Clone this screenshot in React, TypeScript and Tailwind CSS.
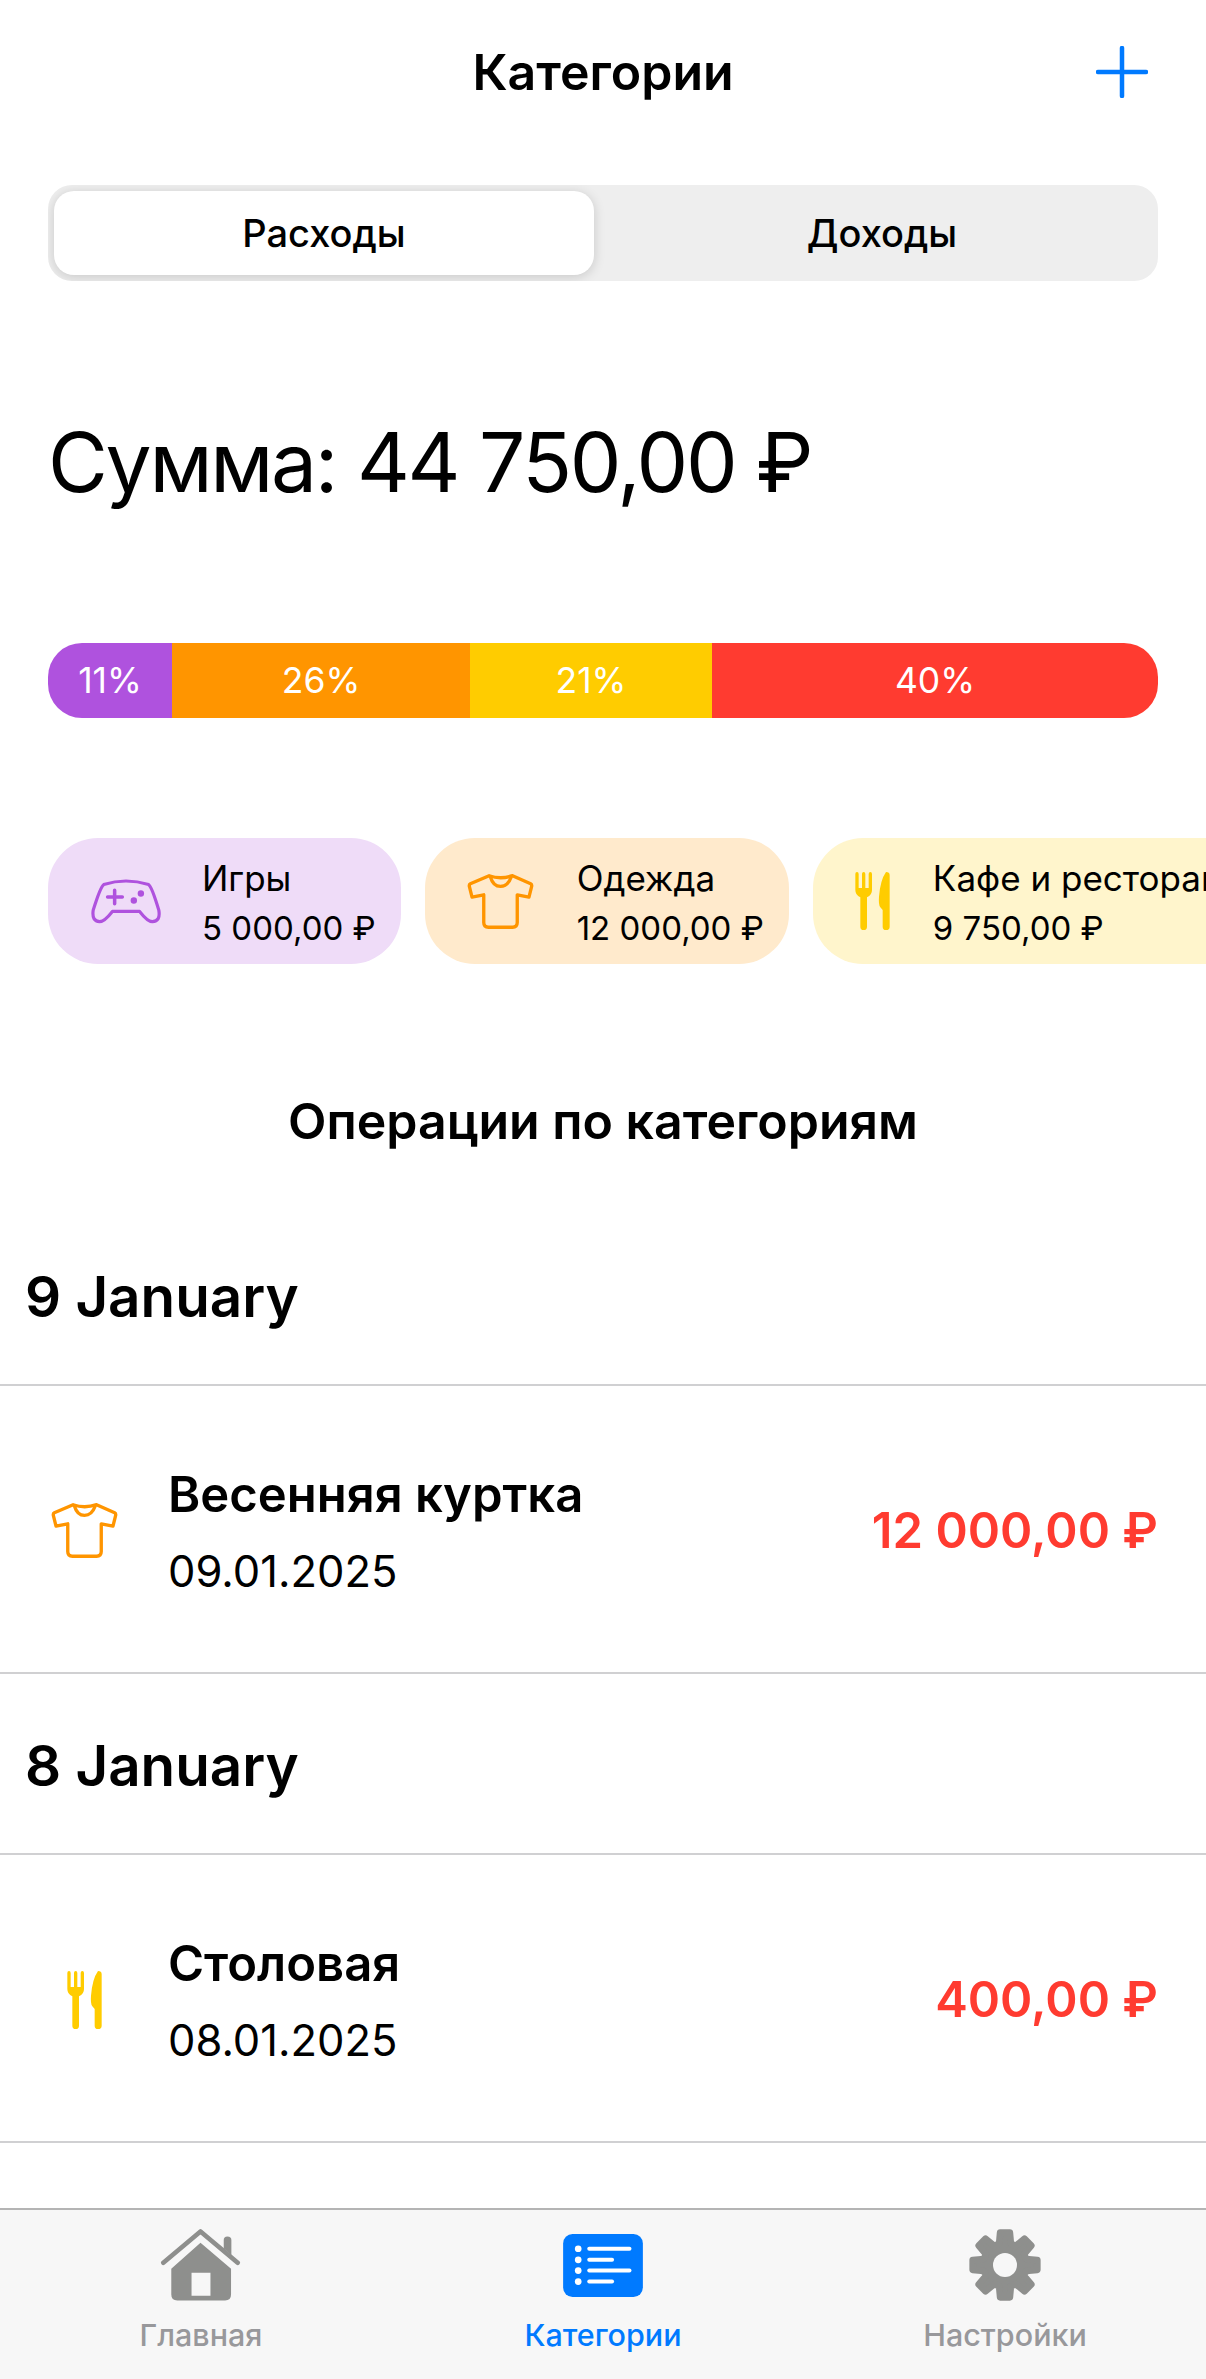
import type { ReactNode } from 'react';

const font = { fontFamily: 'Inter, "Noto Sans", sans-serif' };

function GamepadIcon() {
  return (
    <svg viewBox="85 80 225 146" className="w-[72px] h-[47px] shrink-0 -mr-[3px]" fill="none" stroke="#af52de" strokeWidth="10">
      <path d="M128 100 Q197 78 268 100 Q278 106 300 180 Q306 215 280 216 Q265 216 240 184 L155 184 Q130 216 115 216 Q90 215 95 180 Q118 106 128 100 Z" strokeLinejoin="round" />
      <path d="M162 118 V160 M140 139 H186" strokeWidth="11" strokeLinecap="round" />
      <circle cx="244" cy="128" r="10" fill="#af52de" stroke="none" />
      <circle cx="222" cy="150" r="10" fill="#af52de" stroke="none" />
    </svg>
  );
}

function ShirtIcon() {
  return (
    <svg viewBox="50 40 200 170" className="w-[67px] h-[57px] shrink-0" fill="none" stroke="#ff9500" strokeWidth="10" strokeLinejoin="round" strokeLinecap="round">
      <path d="M116 48 L60 72 Q56 74 57 80 L65 112 L100 105 V188 Q100 202 114 202 H186 Q200 202 200 188 V105 L235 112 L243 80 Q244 74 240 72 L186 48 Q150 60 116 48 Z" />
      <path d="M120 52 Q128 80 150 80 Q172 80 182 52" />
    </svg>
  );
}

function CutleryIcon() {
  return (
    <svg viewBox="72 36 105 174" className="w-[35px] h-[58px] shrink-0" fill="#ffcc00">
      <path d="M73 42 Q73 36 78 36 Q83 36 83 42 V84 H93 V42 Q93 36 98 36 Q103 36 103 42 V84 H113 V42 Q113 36 118 36 Q123 36 123 42 V90 Q123 106 108 112 V200 Q108 210 98 210 Q88 210 88 200 V112 Q73 106 73 90 Z" />
      <path d="M165 36 Q176 36 176 46 V200 Q176 210 165 210 Q155 210 155 200 V150 L148 142 Q142 134 144 110 Q148 60 165 36 Z" />
    </svg>
  );
}

function HomeIcon() {
  return (
    <svg viewBox="118 57 244 216" className="w-[81px] h-[72px] -translate-x-[1px]" fill="#8e8f8d">
      <path d="M128 158 L240 64 L352 158" fill="none" stroke="#8e8f8d" strokeWidth="14" strokeLinecap="round" strokeLinejoin="round" />
      <path d="M310 90 Q310 79 321 79 Q333 79 333 90 V135 L310 115 Z" />
      <path fillRule="evenodd" d="M240 98 L332 176 V254 Q332 272 314 272 H170 Q152 272 152 254 V176 Z M213 188 V258 H270 V188 Z" />
    </svg>
  );
}

function ListIcon() {
  return (
    <svg viewBox="67 70 238 188" className="w-[80px] h-[63px]">
      <rect x="67" y="70" width="238" height="188" rx="28" fill="#007aff" />
      {[114, 147, 179, 212].map((y, i) => (
        <g key={y}>
          <circle cx="112" cy={y} r="10" fill="#fff" />
          <path d={`M145 ${y} H${i % 2 === 0 ? 265 : 213}`} stroke="#fff" strokeWidth="12" strokeLinecap="round" />
        </g>
      ))}
    </svg>
  );
}

function gearPath() {
  // 8 зубьев вокруг центра
  let d = '';
  for (let i = 0; i < 8; i++) {
    const a = (i * Math.PI) / 4 - Math.PI / 2;
    const pt = (r: number, o: number) => `${(r * Math.cos(a + o)).toFixed(1)} ${(r * Math.sin(a + o)).toFixed(1)}`;
    d += `${i === 0 ? 'M' : 'L'}${pt(66, -0.27)} L${pt(98, -0.15)} L${pt(98, 0.15)} L${pt(66, 0.27)} `;
  }
  return d + 'Z';
}

function GearIcon() {
  return (
    <svg viewBox="-108 -108 216 216" className="w-[72px] h-[72px]">
      <path d={gearPath()} fill="#8e8f8d" stroke="#8e8f8d" strokeWidth="20" strokeLinejoin="round" />
      <circle r="36" fill="#f7f7f7" />
    </svg>
  );
}

function Chip({ bg, icon, title, value }: { bg: string; icon: ReactNode; title: string; value: string }) {
  return (
    <div className={`flex items-center shrink-0 h-[126px] rounded-[50px] pl-[42px] pr-[25px] gap-[43px] ${bg}`}>
      {icon}
      <div className="text-black whitespace-nowrap pt-[3px]">
        <div className="text-[35px] leading-[50px]">{title}</div>
        <div className="text-[33px] leading-[50px]">{value}</div>
      </div>
    </div>
  );
}

function DateHeader({ label }: { label: string }) {
  return (
    <div className="h-[181px] flex items-center pl-[25px] pt-[5px] border-b-2 border-[#d0d0d2] text-[56.5px] font-semibold text-black">
      {label}
    </div>
  );
}

function Row({ icon, title, date, amount }: { icon: ReactNode; title: string; date: string; amount: string }) {
  return (
    <div className="h-[288px] flex items-center pr-12 pt-[8px] border-b-2 border-[#d0d0d2]">
      <div className="w-[168px] pb-[5px] flex justify-center shrink-0">{icon}</div>
      <div className="flex-1">
        <div className="text-[49px] leading-[76px] font-semibold text-black">{title}</div>
        <div className="text-[43.5px] leading-[76px] text-black">{date}</div>
      </div>
      <div className="pb-[5px] text-[49px] font-semibold text-[#ff3b30]">{amount}</div>
    </div>
  );
}

function Tab({ icon, label, active }: { icon: ReactNode; label: string; active?: boolean }) {
  return (
    <div className="flex flex-col items-center">
      <div className="h-[72px] flex items-center">{icon}</div>
      <div className={`mt-[17px] text-[30.5px] leading-[34px] font-medium ${active ? 'text-[#007aff]' : 'text-[#98989b]'}`}>{label}</div>
    </div>
  );
}

export default function App() {
  return (
    <div className="w-[1206px] h-[2379px] flex flex-col bg-white overflow-hidden" style={font}>
      <div className="flex-1 min-h-0 overflow-hidden">
        {/* Заголовок */}
        <div className="h-[144px] grid grid-cols-[1fr_auto_1fr] items-center px-[58px]">
          <div />
          <div className="text-[50px] font-semibold text-black">Категории</div>
          <svg viewBox="0 0 52 52" className="w-[52px] h-[52px] justify-self-end">
            <path d="M26 2 V50 M2 26 H50" stroke="#007aff" strokeWidth="4.5" strokeLinecap="round" />
          </svg>
        </div>

        {/* Переключатель */}
        <div className="mx-12 mt-[41px] h-[96px] bg-[#eeeeee] rounded-[24px] overflow-hidden grid grid-cols-2 pl-[6px] py-[6px] text-[38px] font-medium text-black">
          <div className="w-[540px] bg-white rounded-[20px] shadow-[0_2px_12px_rgba(0,0,0,0.16)] flex items-center justify-center">Расходы</div>
          <div className="flex items-center justify-center">Доходы</div>
        </div>

        <div className="mx-12 mt-[131px] h-[100px] flex items-center text-[82px] tracking-[-2.3px] text-black whitespace-nowrap">Сумма: 44 750,00 ₽</div>

        {/* Полоса долей */}
        <div className="mx-12 mt-[131px] h-[75px] rounded-[34px] overflow-hidden flex text-[35.5px] text-white">
          <div className="w-[124px] bg-[#af52de] flex items-center justify-center">11%</div>
          <div className="w-[298px] bg-[#ff9500] flex items-center justify-center">26%</div>
          <div className="w-[242px] bg-[#ffcc00] flex items-center justify-center">21%</div>
          <div className="flex-1 bg-[#ff3b30] flex items-center justify-center">40%</div>
        </div>

        {/* Категории */}
        <div className="mt-[120px] pl-12 flex gap-[24px] overflow-hidden">
          <Chip bg="bg-[#efdcf8]" icon={<GamepadIcon />} title="Игры" value="5 000,00 ₽" />
          <Chip bg="bg-[#ffeacc]" icon={<ShirtIcon />} title="Одежда" value="12 000,00 ₽" />
          <Chip bg="bg-[#fff5cc]" icon={<CutleryIcon />} title="Кафе и рестораны" value="9 750,00 ₽" />
        </div>

        <div className="mt-[132px] h-[50px] flex items-center justify-center text-[50px] font-semibold text-black">Операции по категориям</div>

        {/* Операции */}
        <div className="mt-[59px]">
          <DateHeader label="9 January" />
          <Row icon={<ShirtIcon />} title="Весенняя куртка" date="09.01.2025" amount="12 000,00 ₽" />
          <DateHeader label="8 January" />
          <Row icon={<CutleryIcon />} title="Столовая" date="08.01.2025" amount="400,00 ₽" />
        </div>
      </div>

      {/* Таб-бар */}
      <div className="h-[171px] shrink-0 bg-[#f7f7f7] border-t-2 border-[#b4b4b4] pt-[19px] grid grid-cols-3">
        <Tab icon={<HomeIcon />} label="Главная" />
        <Tab icon={<ListIcon />} label="Категории" active />
        <Tab icon={<GearIcon />} label="Настройки" />
      </div>
    </div>
  );
}
